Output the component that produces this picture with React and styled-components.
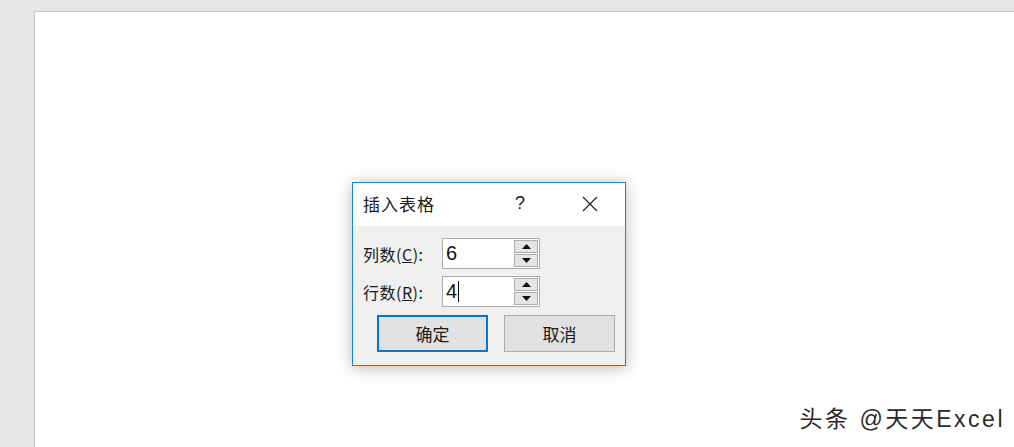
import React from 'react';
import styled, { createGlobalStyle } from 'styled-components';

const GlobalStyle = createGlobalStyle`
  html, body {
    margin: 0;
    padding: 0;
    background: #e6e6e6;
  }
  body {
    font-family: "Noto Sans CJK SC", "Noto Sans", sans-serif;
  }
`;

const Viewport = styled.div`
  width: 1014px;
  height: 447px;
  box-sizing: border-box;
  padding: 11px 0 0 34px;
  background: #e6e6e6;
  overflow: hidden;
`;

const Page = styled.div`
  position: relative;
  height: 100%;
  background: #ffffff;
  border-top: 1px solid #c6c6c6;
  border-left: 1px solid #c6c6c6;
`;

const Dialog = styled.div`
  position: absolute;
  left: 317px;
  top: 170px;
  width: 274px;
  box-sizing: border-box;
  border: 1px solid #1883d7;
  background: #f0f0f0;
  box-shadow: 0 2px 14px rgba(0, 0, 0, 0.28);
`;

const TitleBar = styled.div`
  display: flex;
  align-items: center;
  height: 43px;
  padding: 0 11px 2px 10px;
  box-sizing: border-box;
  background: #ffffff;
  color: #1a1a1a;
`;

const Title = styled.div`
  flex: 1;
  font-size: 17px;
  letter-spacing: 1px;
`;

const HelpButton = styled.div`
  width: 40px;
  text-align: center;
  font-family: "Liberation Sans", sans-serif;
  font-size: 18px;
  margin-right: 26px;
`;

const CloseButton = styled.div`
  width: 48px;
  display: flex;
  justify-content: center;
  align-items: center;
`;

const Body = styled.div`
  padding: 12px 10px 13px 10px;
`;

const Row = styled.div`
  display: flex;
  align-items: center;
  margin-bottom: ${p => p.$gap}px;
`;

const Label = styled.div`
  width: 79px;
  font-size: 16px;
  letter-spacing: 0.5px;
  color: #1a1a1a;
`;

const Underlined = styled.span`
  text-decoration: underline;
  text-underline-offset: 1px;
`;

const SpinBox = styled.div`
  display: flex;
  align-items: center;
  width: 98px;
  height: 31px;
  box-sizing: border-box;
  border: 1px solid #adadad;
  background: #ffffff;
  padding: 1px 1px 1px 3px;
`;

const Value = styled.div`
  flex: 1;
  display: flex;
  align-items: center;
  font-family: "Liberation Sans", sans-serif;
  font-size: 20px;
  color: #111;
`;

const Caret = styled.span`
  display: inline-block;
  width: 1px;
  height: 21px;
  background: #000;
  margin-left: 1px;
`;

const Spinners = styled.div`
  display: flex;
  flex-direction: column;
  gap: 1px;
  width: 24px;
`;

const SpinButton = styled.div`
  height: 13px;
  box-sizing: border-box;
  border: 1px solid #adadad;
  background: #e5e5e5;
  display: flex;
  align-items: center;
  justify-content: center;
`;

const Buttons = styled.div`
  display: flex;
  justify-content: flex-end;
  gap: 16px;
`;

const Button = styled.div`
  width: 111px;
  height: 37px;
  box-sizing: border-box;
  display: flex;
  align-items: center;
  justify-content: center;
  background: #e1e1e1;
  border: ${p => (p.$primary ? '2px solid #0078d7' : '1px solid #adadad')};
  font-size: 17px;
  color: #1a1a1a;
`;

const Watermark = styled.div`
  position: absolute;
  right: 9px;
  bottom: 14px;
  font-family: "Liberation Sans", "Noto Sans CJK SC", sans-serif;
  font-size: 23px;
  color: #2a2a2a;
  text-shadow: 0 0 1px #ffffff;
  letter-spacing: 2.5px;
`;

const Arrow = ({ up }) => (
  <svg width="9" height="5" viewBox="0 0 9 5">
    <polygon points={up ? '0,5 9,5 4.5,0' : '0,0 9,0 4.5,5'} fill="#111" />
  </svg>
);

const Spinner = ({ value, caret }) => (
  <SpinBox>
    <Value>
      {value}
      {caret && <Caret />}
    </Value>
    <Spinners>
      <SpinButton><Arrow up /></SpinButton>
      <SpinButton><Arrow /></SpinButton>
    </Spinners>
  </SpinBox>
);

const App = () => (
  <>
    <GlobalStyle />
    <Viewport>
      <Page>
        <Dialog>
          <TitleBar>
            <Title>插入表格</Title>
            <HelpButton>?</HelpButton>
            <CloseButton>
              <svg width="16" height="16" viewBox="0 0 16 16">
                <path d="M1 1L15 15M15 1L1 15" stroke="#222" strokeWidth="1.2" fill="none" />
              </svg>
            </CloseButton>
          </TitleBar>
          <Body>
            <Row $gap={7}>
              <Label>列数(<Underlined>C</Underlined>):</Label>
              <Spinner value="6" />
            </Row>
            <Row $gap={8}>
              <Label>行数(<Underlined>R</Underlined>):</Label>
              <Spinner value="4" caret />
            </Row>
            <Buttons>
              <Button $primary>确定</Button>
              <Button>取消</Button>
            </Buttons>
          </Body>
        </Dialog>
        <Watermark>头条 @天天Excel</Watermark>
      </Page>
    </Viewport>
  </>
);

export default App;
